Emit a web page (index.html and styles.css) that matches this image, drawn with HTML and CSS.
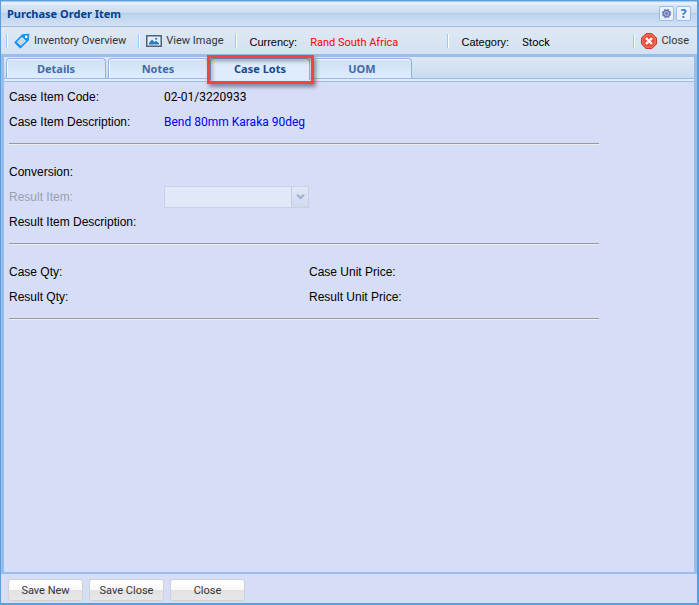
FILE: index.html
```
<!DOCTYPE html>
<html lang="en">
<head>
    <meta charset="UTF-8">
    <meta name="viewport" content="width=device-width, initial-scale=1.0">
    <title>Purchase Order Item</title>
    <link rel="stylesheet" href="styles.css">
</head>
<body>
    <div class="window">
        <div class="titlebar">
            <h1>Purchase Order Item</h1>
            <button class="tool" aria-label="Settings">
                <svg width="11" height="11" viewBox="0 0 11 11">
                    <circle cx="5.5" cy="5.5" r="4.1" fill="none" stroke="#8790c4" stroke-width="1.4" stroke-dasharray="2 1.22"/>
                    <circle cx="5.5" cy="5.5" r="3.2" fill="#a9b2dc" stroke="#6671ad" stroke-width="1.2"/>
                    <circle cx="5.5" cy="5.5" r="1.2" fill="#5f6aaa"/>
                </svg>
            </button>
            <button class="tool help" aria-label="Help">?</button>
        </div>
        <div class="toolbar">
            <span class="sep"></span>
            <button class="tb-btn">
                <svg width="16" height="16" viewBox="0 0 16 16">
                    <path d="M8.2 1.2L14.2 0.8Q15.4 0.8 15.3 2L14.9 7.2L6.8 15.2Q6.3 15.6 5.8 15.2L0.6 10Q0.2 9.4 0.6 8.9Z" fill="#1492f4"/>
                    <path d="M8 4L12 8L6.8 12.8L2.8 9Z" fill="#e9edf0"/>
                    <path d="M6.6 5.4L10.4 9.2M5.2 6.8L9 10.6M3.9 8.1L7.7 11.9M9.2 5.2L4.2 10.2M10.8 6.8L5.8 11.8" stroke="#a9b1b8" stroke-width="0.6"/>
                    <rect x="11" y="2.6" width="2.4" height="2.4" fill="#fff"/>
                </svg>
                Inventory Overview
            </button>
            <span class="sep"></span>
            <button class="tb-btn">
                <svg width="16" height="12" viewBox="0 0 16 12">
                    <rect x="0.75" y="0.75" width="14.5" height="10.5" fill="#e3edf7" stroke="#4c6378" stroke-width="1.5"/>
                    <path d="M3 9.5V8L6 4.5L8.3 7L10 5.8L13 8.3V9.5Z" fill="#2b7cc4"/>
                    <circle cx="10.2" cy="3.8" r="1.1" fill="#2b7cc4"/>
                </svg>
                View Image
            </button>
            <span class="sep"></span>
            <span class="info currency"><span class="label">Currency:</span><span class="value red">Rand South Africa</span></span>
            <span class="sep"></span>
            <span class="info"><span class="label">Category:</span><span class="value">Stock</span></span>
            <span class="fill"></span>
            <span class="sep"></span>
            <button class="tb-btn">
                <svg width="16" height="16" viewBox="0 0 16 16">
                    <path d="M5 0.6H11L15.4 5V11L11 15.4H5L0.6 11V5Z" fill="#e8503c" stroke="#c03020"/>
                    <path d="M5.2 1.8H10.8L14.2 5.2V10.8L10.8 14.2H5.2L1.8 10.8V5.2Z" fill="none" stroke="#f2877a" stroke-width="0.8"/>
                    <path d="M5 5L11 11M11 5L5 11" stroke="#fff" stroke-width="2.4"/>
                </svg>
                Close
            </button>
        </div>
        <div class="panel">
            <div class="tabs" role="tablist">
                <button class="tab" role="tab">Details</button>
                <button class="tab" role="tab">Notes</button>
                <button class="tab active" role="tab" aria-selected="true">Case Lots<span class="marker"></span></button>
                <button class="tab" role="tab">UOM</button>
            </div>
            <div class="content">
                <div class="row"><span class="label">Case Item Code:</span><span class="value">02-01/3220933</span></div>
                <div class="row"><span class="label">Case Item Description:</span><span class="value blue">Bend 80mm Karaka 90deg</span></div>
                <hr>
                <div class="row"><span class="label">Conversion:</span></div>
                <div class="row disabled">
                    <label class="label" for="result-item">Result Item:</label>
                    <span class="combo">
                        <select id="result-item" disabled><option></option></select>
                        <span class="arrow">
                            <svg width="9" height="6" viewBox="0 0 9 6"><path d="M0.5 0.5H2.5L4.5 2.5L6.5 0.5H8.5V1.5L4.5 5.5L0.5 1.5Z" fill="#9fb0d6"/></svg>
                        </span>
                    </span>
                </div>
                <div class="row"><span class="label">Result Item Description:</span></div>
                <hr>
                <div class="row pair"><span class="label">Case Qty:</span><span class="label">Case Unit Price:</span></div>
                <div class="row pair"><span class="label">Result Qty:</span><span class="label">Result Unit Price:</span></div>
                <hr>
            </div>
        </div>
        <div class="footer">
            <button class="btn">Save New</button>
            <button class="btn">Save Close</button>
            <button class="btn">Close</button>
        </div>
    </div>
</body>
</html>
```

FILE: styles.css
```
*{
    margin: 0;
    padding: 0;
    box-sizing: border-box;
}
body{
    font-family: "Liberation Sans", Arial, sans-serif;
    font-size: 12px;
    color: #000;
}
button{
    font-family: Roboto, Tahoma, sans-serif;
    font-size: 11px;
    border: none;
    background: none;
    cursor: pointer;
}
.window{
    display: flex;
    flex-direction: column;
    min-height: 100vh;
    background: #d6def7;
    border: 1px solid #5a9fdd;
    border-right-width: 2px;
    border-bottom-width: 2px;
}
.titlebar{
    display: flex;
    align-items: center;
    gap: 2px;
    height: 26px;
    padding: 0 6px;
    border-bottom: 1px solid #99bce8;
    background: linear-gradient(#99bce8 0, #f4f8fd 2px, #d9e6f4 4px, #ccdcef 12px, #b3cdee 12px, #b3cdee 13px, #bdd2ee 13px, #d3e1f3 100%);
}
.titlebar h1{
    flex: 1;
    font-family: "Noto Sans", Tahoma, sans-serif;
    font-size: 11px;
    font-weight: 700;
    color: #04408c;
}
.tool{
    display: flex;
    align-items: center;
    justify-content: center;
    width: 15px;
    height: 15px;
    border: 1px solid #99bce8;
    border-radius: 2px;
    background: #eaf2fb;
}
.help{
    font-family: "Noto Sans", Tahoma, sans-serif;
    font-size: 12px;
    font-weight: 700;
    line-height: 13px;
    color: #3f78b5;
}
.toolbar{
    display: flex;
    align-items: center;
    height: 27px;
    padding: 0 8px 0 5px;
    font-size: 11px;
    background: linear-gradient(#dfe9f5, #d3e1f1);
}
.sep{
    width: 2px;
    height: 14px;
    border-left: 1px solid #98c8ff;
    border-right: 1px solid #fff;
}
.tb-btn{
    display: flex;
    align-items: center;
    gap: 4px;
    padding: 0 12px 0 6px;
    color: #333;
}
.tb-btn:last-child{
    padding-right: 0;
}
.info{
    display: flex;
    align-items: center;
    gap: 13px;
    padding: 3px 0 0 12px;
}
.currency{
    width: 210px;
}
.fill{
    flex: 1;
}
.value{
    font-family: Roboto, Tahoma, sans-serif;
}
.red{
    color: #f00;
}
.blue{
    color: #00f;
}
.panel{
    flex: 1;
    display: flex;
    flex-direction: column;
    border: 3px solid #99bce8;
    border-bottom-width: 2px;
}
.tabs{
    display: flex;
    align-items: flex-end;
    gap: 2px;
    height: 25px;
    padding: 0 2px 3px;
    border-bottom: 1px solid #99bce8;
    background: linear-gradient(#dde8f5, #cbdbee 21px, #99bce8 21px, #99bce8 22px, #deecfd 22px);
}
.tab{
    position: relative;
    width: 100px;
    height: 20px;
    border: 1px solid #8db2e3;
    border-bottom: none;
    border-radius: 4px 4px 0 0;
    background: linear-gradient(#cfe0f6, #deecfd);
    box-shadow: inset 0 1px #f4f9ff, inset 1px 0 #f4f9ff;
    font-family: "Noto Sans", Tahoma, sans-serif;
    font-weight: 700;
    color: #416da3;
}
.active{
    height: 22px;
    margin-bottom: -2px;
    padding-bottom: 2px;
    background: #deecfd;
    color: #15498b;
}
/* highlight frame around the current tab */
.marker{
    position: absolute;
    inset: -4px -5px -4px -4px;
    border: 3px solid #fb4040;
    box-shadow: 2px 3px 4px rgba(0,0,0,.4), inset 2px 3px 4px rgba(0,0,0,.35);
    z-index: 1;
}
.content{
    padding: 2px 5px;
}
.row{
    display: flex;
    align-items: center;
    height: 25px;
    max-width: 590px;
}
.row .label{
    flex: none;
    width: 155px;
}
.pair .label{
    width: 300px;
}
hr{
    max-width: 590px;
    height: 2px;
    margin: 9px 0 14px;
    border: none;
    border-top: 1px solid #9a9a9a;
    border-bottom: 1px solid #eee;
}
.disabled .label{
    color: #9aa0b0;
}
.combo{
    display: flex;
    width: 145px;
    height: 22px;
    border: 1px solid #c8d1e8;
    background: #e1e8f7;
}
.combo select{
    flex: 1;
    min-width: 0;
    appearance: none;
    border: none;
    background: none;
}
.arrow{
    display: flex;
    align-items: center;
    justify-content: center;
    width: 17px;
    border-left: 1px solid #c3cfe8;
    background: linear-gradient(#e0e8f6, #d0daee);
}
.footer{
    display: flex;
    gap: 6px;
    height: 29px;
    padding: 5px 7px 2px;
}
.btn{
    width: 75px;
    height: 22px;
    border: 1px solid #d1d1d1;
    border-radius: 3px;
    background: linear-gradient(#fff, #f9f9f9 48%, #e2e2e2 52%, #e7e7e7);
    color: #333;
}
```
